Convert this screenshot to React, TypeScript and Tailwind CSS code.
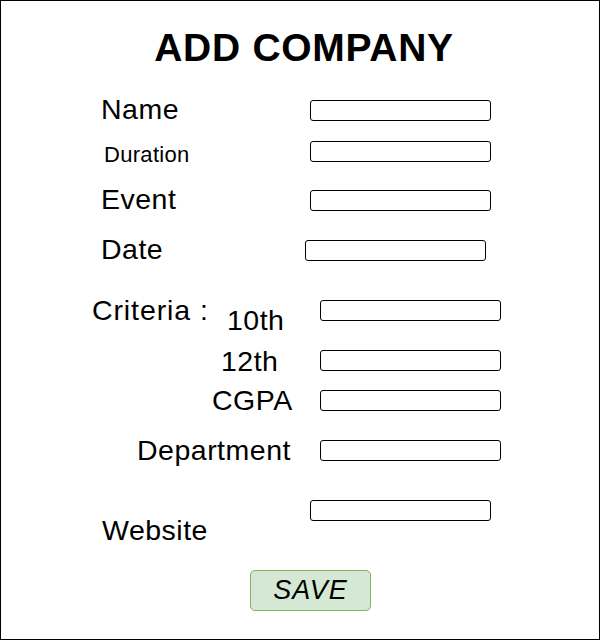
import React from "react";

function Field({ className = "" }: { className?: string }) {
  return (
    <input
      type="text"
      className={`block w-[181px] h-[21px] shrink-0 border border-black rounded-[3px] bg-white outline-none ${className}`}
    />
  );
}

export default function App() {
  return (
    <div className="w-[600px] h-[640px] border border-black bg-white text-black font-['Liberation_Sans',Arial,sans-serif] leading-none">
      {/* Title */}
      <h1 className="pt-[27px] pl-[8px] text-center text-[39px] font-bold leading-none tracking-[0.7px]">ADD COMPANY</h1>

      <form className="flex flex-col mt-[29px] text-[28.5px] tracking-[0.5px]">
        {/* Name */}
        <div className="flex items-start h-[45px]">
          <label className="w-[309px] shrink-0 pl-[100px] -mt-[1px]">Name</label>
          <Field className="mt-[4px]" />
        </div>

        {/* Duration */}
        <div className="flex items-start h-[45px]">
          <label className="w-[309px] shrink-0 pl-[103px] mt-[3px] text-[22px] tracking-[0.3px]">Duration</label>
          <Field />
        </div>

        {/* Event */}
        <div className="flex items-start h-[50px]">
          <label className="w-[309px] shrink-0 pl-[100px] -mt-[1px]">Event</label>
          <Field className="mt-[4px]" />
        </div>

        {/* Date */}
        <div className="flex items-start h-[61px]">
          <label className="w-[304px] shrink-0 pl-[100px] -mt-[1px]">Date</label>
          <Field className="mt-[4px]" />
        </div>

        {/* Criteria : 10th */}
        <div className="flex items-start h-[51px]">
          <div className="flex w-[319px] shrink-0 pl-[91px] -mt-[1px]">
            <span className="flex w-[135px] shrink-0">
              <span className="tracking-[0.9px]">Criteria</span>
              <span className="ml-[9px]">:</span>
            </span>
            <label className="mt-[10px]">10th</label>
          </div>
          <Field className="mt-[3px]" />
        </div>

        {/* 12th */}
        <div className="flex items-start h-[39px]">
          <label className="w-[319px] shrink-0 pl-[220px] -mt-[1px]">12th</label>
          <Field className="mt-[2px]" />
        </div>

        {/* CGPA */}
        <div className="flex items-start h-[50px]">
          <label className="w-[319px] shrink-0 pl-[211px] -mt-[1px]">CGPA</label>
          <Field className="mt-[3px]" />
        </div>

        {/* Department */}
        <div className="flex items-start h-[63px]">
          <label className="w-[319px] shrink-0 pl-[136px] -mt-[1px]">Department</label>
          <Field className="mt-[3px]" />
        </div>

        {/* Website */}
        <div className="flex items-start h-[70px]">
          <label className="w-[309px] shrink-0 pl-[101px] mt-[16px]">Website</label>
          <Field />
        </div>

        <div className="flex">
          <button
            type="button"
            className="ml-[249px] w-[121px] h-[41px] bg-[#d5e8d4] border border-[#82b366] rounded-[5px] italic text-[27px] tracking-[1px] leading-none"
          >
            SAVE
          </button>
        </div>
      </form>
    </div>
  );
}
